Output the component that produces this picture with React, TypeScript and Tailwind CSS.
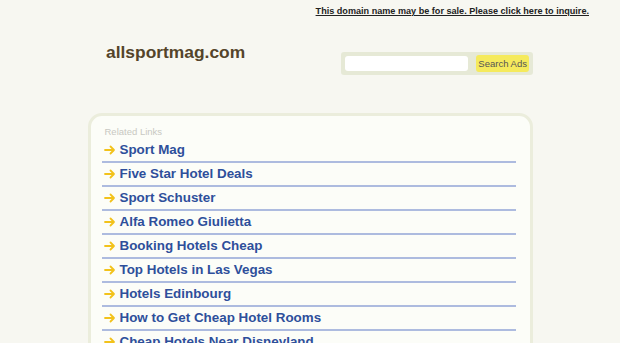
const links = [
  'Sport Mag',
  'Five Star Hotel Deals',
  'Sport Schuster',
  'Alfa Romeo Giulietta',
  'Booking Hotels Cheap',
  'Top Hotels in Las Vegas',
  'Hotels Edinbourg',
  'How to Get Cheap Hotel Rooms',
  'Cheap Hotels Near Disneyland',
];

function Arrow() {
  return (
    <svg width="12" height="10" viewBox="0 0 12 10" className="shrink-0">
      <path d="M1 5h9M6.5 1.5L10 5l-3.5 3.5" stroke="#f2c21b" strokeWidth="1.8" fill="none" strokeLinecap="round" strokeLinejoin="round" />
    </svg>
  );
}

export default function App() {
  return (
    <div className="w-[620px] h-[343px] overflow-hidden bg-[#f7f7f1] font-['Liberation_Sans',Arial,sans-serif]">
      <div className="flex justify-end pr-[31px] pt-[5px] h-[22px]">
        <a href="#" className="text-[9.1px] font-bold text-[#222] underline leading-[12px] whitespace-nowrap">
          This domain name may be for sale. Please click here to inquire.
        </a>
      </div>

      <div className="flex items-start justify-between pl-[106px] pr-[87px] pt-[19px] h-[91px]">
        <div className="text-[17.4px] font-bold text-[#54442a] leading-[22px]">allsportmag.com</div>
        <div className="mt-[11px] flex items-center gap-[8px] bg-[#e6e9d6] rounded-[3px] px-[4px] h-[23px] w-[192px]">
          <div className="w-[124px] h-[15px] bg-white rounded-[3px]" />
          <button className="h-[17px] w-[53px] bg-[#f5ea5c] rounded-[3px] text-[9.5px] text-[#555] leading-[17px] whitespace-nowrap">
            Search Ads
          </button>
        </div>
      </div>

      <div className="mx-auto w-[445px] border-[3px] border-[#ebeddc] rounded-[14px] bg-[#fcfdf8] pl-[11px] pr-[14px] pt-[10px] pb-[10px]">
        <div className="pl-[3px] text-[9.5px] text-[#c8c8c2] leading-[12px] h-[13px]">Related Links</div>
        {links.map((l) => (
          <div key={l} className="flex items-center gap-[4px] h-[24px] border-b-2 border-[#adbbdf] pl-[2px]">
            <Arrow />
            <a href="#" className="text-[13.4px] font-bold text-[#2e4f9b] leading-[18px] no-underline whitespace-nowrap">{l}</a>
          </div>
        ))}
      </div>
    </div>
  );
}
